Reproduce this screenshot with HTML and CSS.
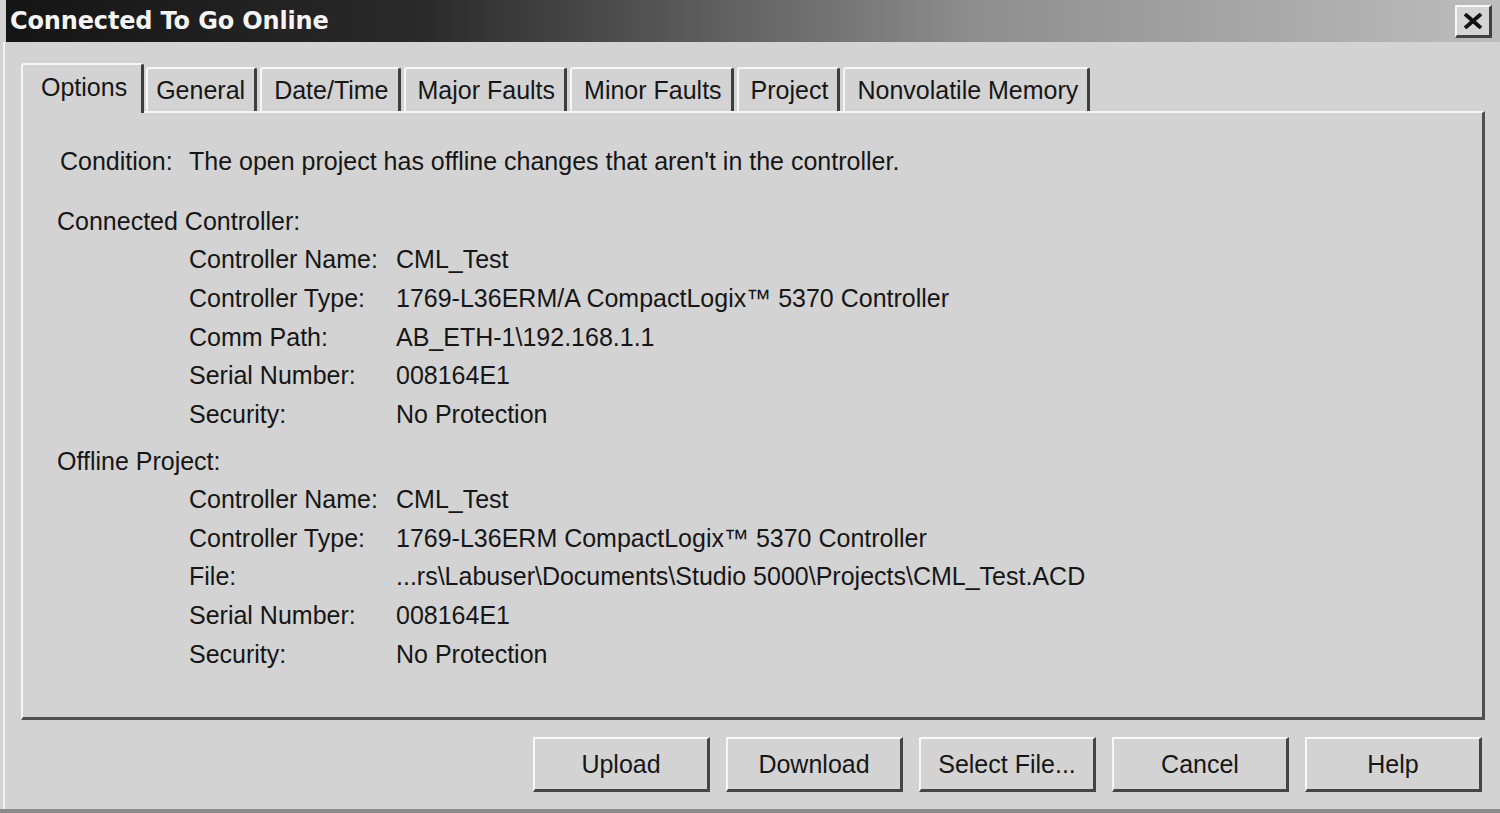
FILE: index.html
```html
<!DOCTYPE html>
<html lang="en">
<head>
<meta charset="utf-8">
<title>Connected To Go Online</title>
<link rel="stylesheet" href="styles.css">
</head>
<body>
<div class="window">
  <div class="titlebar">
    <span class="title">Connected To Go Online</span>
    <button class="close" aria-label="Close">
      <svg width="20" height="16" viewBox="0 0 20 16"><path d="M2 1 L18 15 M18 1 L2 15" stroke="#111" stroke-width="3.8" fill="none"/></svg>
    </button>
  </div>
  <div class="client">
    <div class="tabs">
      <div class="tab selected">Options</div>
      <div class="tab">General</div>
      <div class="tab">Date/Time</div>
      <div class="tab">Major Faults</div>
      <div class="tab">Minor Faults</div>
      <div class="tab">Project</div>
      <div class="tab">Nonvolatile Memory</div>
    </div>
    <div class="panel">
      <div class="cond"><span class="cond-label">Condition:</span><span>The open project has offline changes that aren't in the controller.</span></div>
      <div class="section">
        <div class="heading">Connected Controller:</div>
        <div class="rows">
          <span>Controller Name:</span><span>CML_Test</span>
          <span>Controller Type:</span><span>1769-L36ERM/A CompactLogix™ 5370 Controller</span>
          <span>Comm Path:</span><span>AB_ETH-1\192.168.1.1</span>
          <span>Serial Number:</span><span>008164E1</span>
          <span>Security:</span><span>No Protection</span>
        </div>
      </div>
      <div class="section second">
        <div class="heading">Offline Project:</div>
        <div class="rows">
          <span>Controller Name:</span><span>CML_Test</span>
          <span>Controller Type:</span><span>1769-L36ERM CompactLogix™ 5370 Controller</span>
          <span>File:</span><span>...rs\Labuser\Documents\Studio 5000\Projects\CML_Test.ACD</span>
          <span>Serial Number:</span><span>008164E1</span>
          <span>Security:</span><span>No Protection</span>
        </div>
      </div>
    </div>
    <div class="buttons">
      <button class="btn">Upload</button>
      <button class="btn">Download</button>
      <button class="btn">Select File...</button>
      <button class="btn">Cancel</button>
      <button class="btn">Help</button>
    </div>
  </div>
</div>
</body>
</html>
```
FILE: styles.css
```css
html, body {
  margin: 0;
  padding: 0;
  background: #d3d3d3;
}
body {
  width: 1500px;
  height: 813px;
  overflow: hidden;
  font-family: "Liberation Sans", Arial, sans-serif;
  font-size: 25px;
  color: #161616;
}
.window {
  box-sizing: border-box;
  height: 813px;
  padding-left: 3px;
  border-bottom: 4px solid #8a8a8a;
  display: flex;
  flex-direction: column;
}
.titlebar {
  height: 42px;
  margin-left: 3px;
  display: flex;
  align-items: center;
  justify-content: space-between;
  background: linear-gradient(to right, #151515 0%, #2a2a2a 28%, #8e8e8e 65%, #bdbdbd 100%);
}
.title {
  font-family: "DejaVu Sans", Verdana, sans-serif;
  font-weight: bold;
  font-size: 24px;
  color: #f4f4f4;
  padding-left: 4px;
  letter-spacing: -0.15px;
}
.close {
  box-sizing: border-box;
  width: 37px;
  height: 33px;
  margin-right: 8px;
  padding: 0;
  background: #d4d4d4;
  border-style: solid;
  border-width: 2px 3px 3px 2px;
  border-color: #f8f8f8 #404040 #404040 #f8f8f8;
  display: flex;
  align-items: center;
  justify-content: center;
}
.client {
  flex: 1;
  border-left: 2px solid #f4f4f4;
  display: flex;
  flex-direction: column;
}
.tabs {
  display: flex;
  align-items: flex-end;
  margin-top: 21px;
  margin-left: 16px;
  height: 48px;
  position: relative;
  z-index: 1;
}
.tab {
  box-sizing: border-box;
  height: 44px;
  line-height: 42px;
  padding: 0 9px 0 12px;
  margin-right: 3px;
  background: #d3d3d3;
  border-style: solid;
  border-width: 2px 3px 0 2px;
  border-color: #f6f6f6 #3e3e3e #f6f6f6 #f6f6f6;
  border-radius: 3px 3px 0 0;
  white-space: nowrap;
}
.tab.selected {
  height: 50px;
  line-height: 44px;
  margin-bottom: -2px;
  padding: 0 14px 0 18px;
  margin-right: 2px;
}
.tab.selected + .tab {
  padding-left: 8px;
}
.panel {
  box-sizing: border-box;
  width: 1464px;
  height: 609px;
  margin-left: 16px;
  border-style: solid;
  border-width: 2px 3px 3px 2px;
  border-color: #f6f6f6 #505050 #505050 #f6f6f6;
  padding: 29px 0 0 34px;
}
.cond {
  display: grid;
  grid-template-columns: 132px 1fr;
  line-height: 38px;
  margin-bottom: 22px;
}
.cond-label {
  padding-left: 3px;
}
.heading {
  line-height: 38px;
}
.rows {
  display: grid;
  grid-template-columns: 207px 1fr;
  grid-auto-rows: 38.75px;
  line-height: 38.75px;
  padding-left: 132px;
}
.section.second {
  margin-top: 8px;
}
.buttons {
  display: flex;
  justify-content: flex-end;
  gap: 16px;
  margin-top: 17px;
  padding-right: 18px;
}
.btn {
  box-sizing: border-box;
  width: 177px;
  height: 55px;
  background: #d3d3d3;
  border-style: solid;
  border-width: 2px 3px 3px 2px;
  border-color: #f8f8f8 #454545 #454545 #f8f8f8;
  font-family: "Liberation Sans", Arial, sans-serif;
  font-size: 25px;
  color: #161616;
  padding: 0;
}
```
